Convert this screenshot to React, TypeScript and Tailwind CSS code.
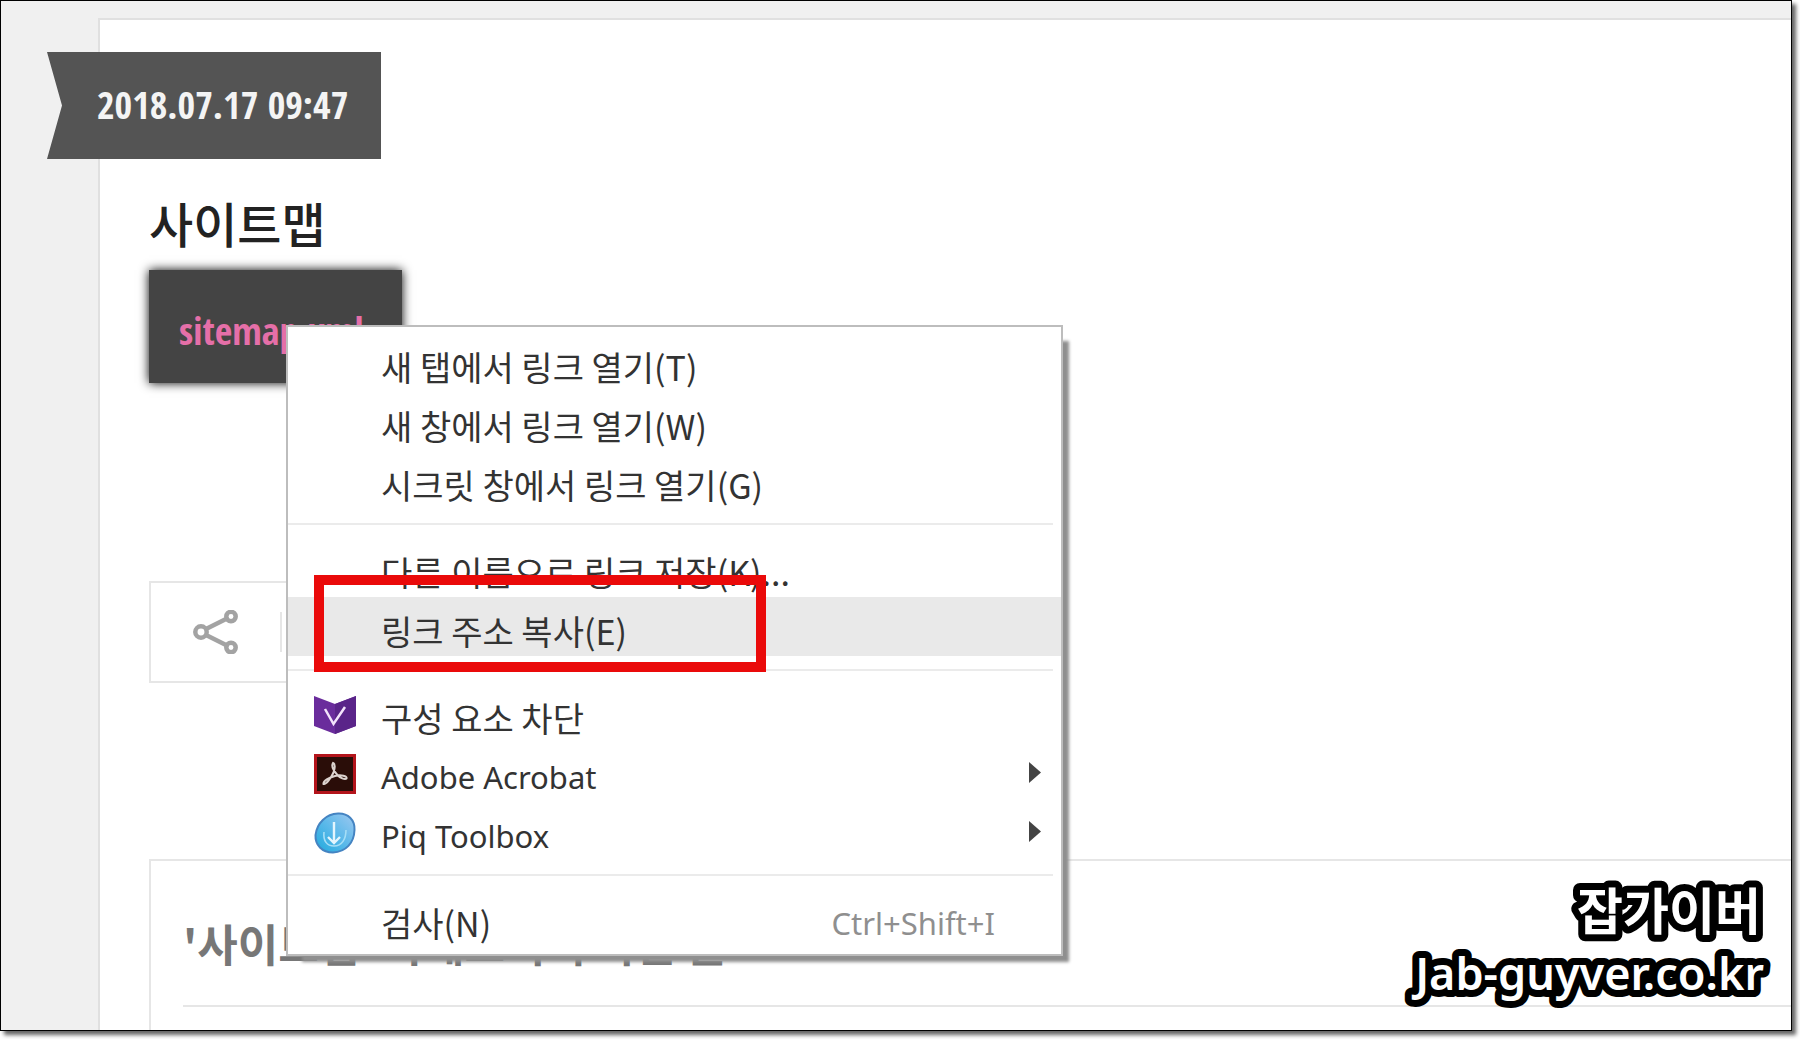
import type { ReactNode } from "react";

interface MenuItemProps {
  label: string;
  latin?: boolean;
  icon?: ReactNode;
  shortcut?: string;
  submenu?: boolean;
  active?: boolean;
  children?: ReactNode;
}

const BlockerIcon = () => (
  <svg viewBox="0 0 42 38" className="h-[38px] w-[42px]" aria-hidden="true">
    <path d="M0 0 21 8 42 0V30L21 38 0 30Z" fill="#6a2c9c" />
    <path d="M21 8 42 0V30L21 38Z" fill="#5a2489" />
    <path
      d="M11 13 19.500 28 31 11"
      fill="none"
      stroke="#f3e3fb"
      strokeWidth="2.500"
    />
  </svg>
);

const AcrobatIcon = () => (
  <svg viewBox="0 0 42 40" className="h-10 w-[42px]" aria-hidden="true">
    <rect x="1.500" y="1.500" width="39" height="37" fill="#2a0d08" stroke="#b3141b" strokeWidth="3" />
    <path
      d="M19 9C17 12 20 17 23 20.500C26 24 31 26 32.500 24.500C33.500 22 27 20.500 21 22C15 23.500 9 27 9.500 30C12 31 17 24 19.500 18.500C21 14 21.500 10 19 9Z"
      fill="none"
      stroke="#dcd2ce"
      strokeWidth="2"
    />
  </svg>
);

const ToolboxIcon = () => (
  <svg viewBox="0 0 42 42" className="h-[42px] w-[42px]" aria-hidden="true">
    <defs>
      <linearGradient id="toolbox" x1="1" y1="0" x2="0" y2="1">
        <stop offset="0" stopColor="#9fc8f0" />
        <stop offset="0.500" stopColor="#5bb9ea" />
        <stop offset="1" stopColor="#1fa9dc" />
      </linearGradient>
    </defs>
    <path
      d="M24 1.500C34 1 41 8 40.500 18C40 31 32 40 19 40.500C8 40.500 1 33 1.500 23C3 11 12 2 24 1.500Z"
      fill="url(#toolbox)"
      stroke="#4584c2"
      strokeWidth="2"
    />
    <path
      d="M20 10V31M14 25 20 31 26 25"
      fill="none"
      stroke="#e4f5fd"
      strokeWidth="2.400"
    />
    <path
      d="M10 20C9 29 13 34 20 34C28 34 32 27 32 18"
      fill="none"
      stroke="#a5def6"
      strokeWidth="1.600"
    />
  </svg>
);

const ShareIcon = () => (
  <svg
    viewBox="0 0 46 44"
    className="h-11 w-[46px]"
    fill="none"
    stroke="#a3a3a3"
    strokeWidth="4.500"
    aria-hidden="true"
  >
    <circle cx="8" cy="22" r="5.700" />
    <circle cx="38" cy="6.500" r="4.700" />
    <circle cx="38" cy="37.500" r="4.700" />
    <path d="M13 19 33 9M13 25 33 35" />
  </svg>
);

const MenuItem = ({
  label,
  latin,
  icon,
  shortcut,
  submenu,
  active,
  children,
}: MenuItemProps) => (
  <div className={active ? "relative bg-[#e9e9e9]" : "relative"}>
    <button
      type="button"
      role="menuitem"
      className="flex h-[59px] w-full items-center pr-5 pl-[26px] text-left"
    >
      <span className="flex w-[67px] shrink-0 pt-0.5">{icon}</span>
      <span
        className={
          latin
            ? "grow pt-2 font-['Noto_Sans',sans-serif] text-[31px] whitespace-nowrap"
            : "grow pt-2 text-[34px] whitespace-nowrap"
        }
      >
        {label}
      </span>
      {shortcut && (
        <span className="pt-2 pr-[46px] font-['Noto_Sans',sans-serif] text-[31px] text-[#8f8f8f]">
          {shortcut}
        </span>
      )}
      {submenu && (
        <svg viewBox="0 0 12 21" className="h-[21px] w-3" aria-hidden="true">
          <path d="M0 0 12 10.500 0 21Z" fill="#444" />
        </svg>
      )}
    </button>
    {children}
  </div>
);

const Separator = () => (
  <div role="separator" className="flex h-7 items-center pr-2">
    <div className="h-0.5 w-full bg-[#ebebeb]" />
  </div>
);

const ContextMenu = () => (
  <div
    role="menu"
    className="absolute top-[324px] left-[285px] w-[777px] border-2 border-[#bdbdbd] bg-white py-1.5 leading-10 text-[#333] shadow-[11px_11px_3px_-5px_#8f8f8f]"
  >
    <MenuItem label="새 탭에서 링크 열기(T)" />
    <MenuItem label="새 창에서 링크 열기(W)" />
    <MenuItem label="시크릿 창에서 링크 열기(G)" />
    <Separator />
    <MenuItem label="다른 이름으로 링크 저장(K)..." />
    <MenuItem label="링크 주소 복사(E)" active>
      <div className="pointer-events-none absolute -top-[22px] left-[26px] z-10 h-[97px] w-[452px] border-[10px] border-[#ea0a0a]" />
    </MenuItem>
    <Separator />
    <MenuItem label="구성 요소 차단" icon={<BlockerIcon />} />
    <MenuItem label="Adobe Acrobat" latin icon={<AcrobatIcon />} submenu />
    <MenuItem label="Piq Toolbox" latin icon={<ToolboxIcon />} submenu />
    <Separator />
    <MenuItem label="검사(N)" shortcut="Ctrl+Shift+I" />
  </div>
);

const Article = () => (
  <article className="mt-[17px] ml-[97px] grow border-t-2 border-l-2 border-[#e0e0e0] bg-white pt-8 pl-[49px]">
    <time className="-ml-[102px] block h-[107px] w-fit bg-[#545454] pr-[33px] pl-[50px] font-['Open_Sans_Condensed','Noto_Sans_CJK_KR',sans-serif] text-[38px] leading-[104px] font-medium text-[#f4f4f4] [clip-path:polygon(0_0,100%_0,100%_100%,0_100%,15px_50%)]">
      2018.07.17 09:47
    </time>
    <h1 className="mt-7 text-5xl leading-[70px] font-medium text-[#222]">사이트맵</h1>
    <div className="mt-[13px] h-[113px] w-[253px] bg-[#444] pl-[30px] font-['Open_Sans_Condensed','Noto_Sans_CJK_KR',sans-serif] text-[38px] leading-[120px] shadow-[0_0_10px_#000]">
      <a href="#sitemap" className="text-[#e56fa8]">
        sitemap.xml
      </a>
    </div>
    <div className="mt-[198px] flex h-[102px] w-[600px] items-center border-2 border-[#e6e6e6] pl-[42px]">
      <button type="button" aria-label="공유">
        <ShareIcon />
      </button>
      <div className="ml-[41px] h-10 w-0.5 bg-[#e6e6e6]" />
    </div>
    <section className="mt-[176px] h-72 border-t-2 border-l-2 border-[#e6e6e6] pt-[49px] pl-8">
      <h2 className="border-b-2 border-[#e6e6e6] pb-[29px] text-[44px] leading-[66px] font-bold text-[#777]">
        '사이트맵' 카테고리의 다른 글
      </h2>
    </section>
  </article>
);

const Watermark = () => (
  <svg
    viewBox="0 0 380 140"
    className="absolute right-[13px] bottom-[14px] h-[140px] w-[380px] fill-white stroke-black stroke-[14px] font-['Noto_Sans','Noto_Sans_CJK_KR',sans-serif] font-semibold [paint-order:stroke]"
    strokeLinejoin="round"
    textAnchor="end"
  >
    <text x="363" y="54" className="text-[50px]">
      잡가이버
    </text>
    <text x="366" y="114" className="text-[45px]">
      Jab-guyver.co.kr
    </text>
  </svg>
);

export default function App() {
  return (
    <div className="h-screen bg-white pr-2 pb-2">
      <main className="relative flex h-full flex-col overflow-hidden border border-black bg-[#f0f0f0] font-['Noto_Sans_CJK_KR',sans-serif] shadow-[4px_4px_4px_rgba(0,0,0,0.6)]">
        <Article />
        <ContextMenu />
        <Watermark />
      </main>
    </div>
  );
}
